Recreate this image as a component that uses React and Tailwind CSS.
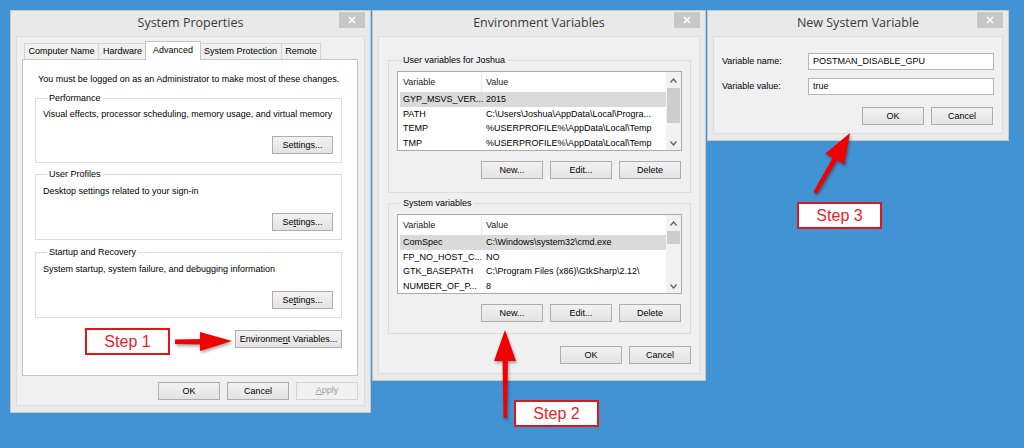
import React from 'react';

// Windows 8 style dialogs: System Properties -> Environment Variables -> New System Variable

const CloseGlyph = () => (
  <svg width="8" height="8" viewBox="0 0 8 8">
    <path d="M1 1 L7 7 M7 1 L1 7" stroke="#ffffff" strokeWidth="1.6" />
  </svg>
);

const Win = ({ title, className, children }) => (
  <div className={`absolute flex flex-col bg-[#e9e9e9] border border-[#c8c8c8] ${className}`}>
    <div className="relative h-[25px] shrink-0 flex items-center justify-center">
      <span className="font-['Open_Sans',sans-serif] text-[12.5px] text-[#3a3a3a]">{title}</span>
      <div className="absolute right-[5px] top-[1px] w-[26px] h-[16px] bg-[#c7c7c7] flex items-center justify-center">
        <CloseGlyph />
      </div>
    </div>
    <div className="flex-1 mx-[5px] mb-[6px] bg-[#f0f0f0] border border-[#dcdcdc] flex flex-col">{children}</div>
  </div>
);

const Btn = ({ children, className = '' }) => (
  <div className={`h-[18px] flex items-center justify-center border border-[#adadad] bg-linear-to-b from-[#f2f2f2] to-[#e3e3e3] text-black text-[9px] leading-none ${className}`}>
    {children}
  </div>
);

const Group = ({ label, className = '', children }) => (
  <fieldset className={`border border-[#dcdcdc] ${className}`}>
    <legend className="ml-[4px] px-[2px] text-[9px] leading-[12px] text-black">{label}</legend>
    {children}
  </fieldset>
);

const Chevron = ({ up }) => (
  <svg width="7" height="5" viewBox="0 0 7 5">
    <path d={up ? 'M0.5 4.5 L3.5 1 L6.5 4.5' : 'M0.5 0.5 L3.5 4 L6.5 0.5'} fill="none" stroke="#606060" strokeWidth="1.2" />
  </svg>
);

const VarList = ({ rows, thumb }) => (
  <div className="h-[80px] border border-[#ababab] bg-white flex">
    <div className="flex-1 flex flex-col min-w-0">
      <div className="h-[20px] shrink-0 flex items-center text-[9px] text-[#222]">
        <div className="w-[84px] h-full pl-[5px] flex items-center border-r border-[#e8e8e8]">Variable</div>
        <div className="pl-[4px]">Value</div>
      </div>
      {rows.map((r, i) => (
        <div
          key={r[0]}
          className={`h-[14.5px] ml-[2px] flex items-center text-[9px] whitespace-nowrap overflow-hidden ${i === 0 ? 'bg-[#dadada]' : ''}`}
        >
          <div className="w-[82px] pl-[3px] shrink-0">{r[0]}</div>
          <div className="pl-[4px]">{r[1]}</div>
        </div>
      ))}
    </div>
    <div className="w-[15px] shrink-0 bg-[#f2f2f2] flex flex-col">
      <div className="h-[16px] flex items-center justify-center"><Chevron up /></div>
      <div className={`mx-[1px] bg-[#cdcdcd] ${thumb}`} />
      <div className="flex-1" />
      <div className="h-[14px] flex items-center justify-center"><Chevron /></div>
    </div>
  </div>
);

const tabs = [
  { label: 'Computer Name', w: 'w-[75px]' },
  { label: 'Hardware', w: 'w-[49px]' },
  { label: 'Advanced', w: 'w-[56px]', active: true },
  { label: 'System Protection', w: 'w-[83px]' },
  { label: 'Remote', w: 'w-[40px]' },
];

const SystemProperties = () => (
  <Win title="System Properties" className="left-[10px] top-[10px] w-[361px] h-[403px]">
    <div className="pl-[5px] pr-[6px] pt-[4px] flex flex-col">
      <div className="h-[18px] flex items-end pl-[2px]">
        {tabs.map((t, i) =>
          t.active ? (
            <div
              key={t.label}
              className={`${t.w} -ml-[2px] -mr-[1px] relative z-10 -mb-px h-[19px] bg-white border border-b-0 border-[#c4c4c4] flex items-center justify-center text-[9px]`}
            >
              {t.label}
            </div>
          ) : (
            <div
              key={t.label}
              className={`${t.w} ${i > 0 ? '-ml-px' : ''} h-[16px] bg-[#f0f0f0] border border-b-0 border-[#d4d4d4] flex items-center justify-center text-[9px]`}
            >
              {t.label}
            </div>
          )
        )}
      </div>
      <div className="h-[317px] bg-white border border-[#c4c4c4] pl-[12px] pr-[15px] pt-[13px] flex flex-col text-[9px] leading-[12px]">
        <p className="pl-[3px]">You must be logged on as an Administrator to make most of these changes.</p>

        <Group label="Performance" className="mt-[7px] pl-[7px] pr-[8px] pb-[8px]">
          <p className="pt-[4px]">Visual effects, processor scheduling, memory usage, and virtual memory</p>
          <div className="mt-[16px] flex justify-end">
            <Btn className="w-[61px]">Settings...</Btn>
          </div>
        </Group>

        <Group label="User Profiles" className="mt-[5px] pl-[7px] pr-[8px] pb-[8px]">
          <p className="pt-[5px]">Desktop settings related to your sign-in</p>
          <div className="mt-[16px] flex justify-end">
            <Btn className="w-[61px]">Se<span className="underline">t</span>tings...</Btn>
          </div>
        </Group>

        <Group label="Startup and Recovery" className="mt-[6px] pl-[7px] pr-[8px] pb-[8px]">
          <p className="pt-[5px]">System startup, system failure, and debugging information</p>
          <div className="mt-[16px] flex justify-end">
            <Btn className="w-[61px]">Se<span className="underline">t</span>tings...</Btn>
          </div>
        </Group>

        <div className="mt-[12px] flex justify-end">
          <Btn className="w-[107px]">Environme<span className="underline">n</span>t Variables...</Btn>
        </div>
      </div>
      <div className="mt-[6px] flex justify-end gap-[7px]">
        <Btn className="w-[62px]">OK</Btn>
        <Btn className="w-[62px]">Cancel</Btn>
        <div className="w-[62px] h-[18px] flex items-center justify-center border border-[#d3d3d3] bg-[#f1f1f1] text-[#a0a0a0] text-[9px]">
          <span className="underline">A</span>pply
        </div>
      </div>
    </div>
  </Win>
);

const userVars = [
  ['GYP_MSVS_VER...', '2015'],
  ['PATH', 'C:\\Users\\Joshua\\AppData\\Local\\Progra...'],
  ['TEMP', '%USERPROFILE%\\AppData\\Local\\Temp'],
  ['TMP', '%USERPROFILE%\\AppData\\Local\\Temp'],
];

const sysVars = [
  ['ComSpec', 'C:\\Windows\\system32\\cmd.exe'],
  ['FP_NO_HOST_C...', 'NO'],
  ['GTK_BASEPATH', 'C:\\Program Files (x86)\\GtkSharp\\2.12\\'],
  ['NUMBER_OF_P...', '8'],
];

const ListButtons = () => (
  <div className="mt-[10px] mr-[1px] flex justify-end gap-[7px]">
    <Btn className="w-[62px]">New...</Btn>
    <Btn className="w-[62px]">Edit...</Btn>
    <Btn className="w-[62px]">Delete</Btn>
  </div>
);

const EnvironmentVariables = () => (
  <Win title="Environment Variables" className="left-[372px] top-[10px] w-[334px] h-[371px]">
    <div className="pl-[9px] pr-[8px] pt-[17px] flex flex-col text-[9px] leading-[12px]">
      <Group label="User variables for Joshua" className="px-[8px] pb-[13px]">
        <div className="pt-[5px]">
          <VarList rows={userVars} thumb="h-[35px]" />
        </div>
        <ListButtons />
      </Group>
      <Group label="System variables" className="mt-[4px] px-[8px] pb-[11px]">
        <div className="pt-[5px]">
          <VarList rows={sysVars} thumb="h-[13px]" />
        </div>
        <ListButtons />
      </Group>
      <div className="mt-[12px] flex justify-end gap-[7px]">
        <Btn className="w-[62px]">OK</Btn>
        <Btn className="w-[62px]">Cancel</Btn>
      </div>
    </div>
  </Win>
);

const NewSystemVariable = () => (
  <Win title="New System Variable" className="left-[707px] top-[10px] w-[302px] h-[131px]">
    <div className="pl-[8px] pr-[8px] pt-[16px] flex flex-col text-[9px]">
      <div className="h-[17px] flex items-center">
        <span className="w-[86px] shrink-0">Variable name:</span>
        <div className="flex-1 h-full bg-white border border-[#b5b5b5] pl-[4px] flex items-center">POSTMAN_DISABLE_GPU</div>
      </div>
      <div className="mt-[8px] h-[17px] flex items-center">
        <span className="w-[86px] shrink-0">Variable value:</span>
        <div className="flex-1 h-full bg-white border border-[#b5b5b5] pl-[4px] flex items-center">true</div>
      </div>
      <div className="mt-[12px] mr-[1px] flex justify-end gap-[7px]">
        <Btn className="w-[62px]">OK</Btn>
        <Btn className="w-[62px]">Cancel</Btn>
      </div>
    </div>
  </Win>
);

const StepLabel = ({ text, className }) => (
  <div className={`absolute w-[85px] h-[27px] bg-white border-2 border-[#e3151c] flex items-center justify-center text-[16px] text-[#ee1c24] ${className}`}>
    {text}
  </div>
);

const Arrows = () => (
  <svg
    className="absolute left-0 top-0 pointer-events-none drop-shadow-[1px_2px_1.5px_rgba(0,0,0,0.35)]"
    width="1024"
    height="448"
    viewBox="0 0 1024 448"
  >
    {/* step 1 -> Environment Variables button */}
    <polygon points="175,339.5 203,339 203,344.5 175,344" fill="#f20000" />
    <polygon points="200,332 232,341 200,351" fill="#f20000" />
    {/* step 2 -> New... */}
    <polygon points="502.5,358 508,358 507,418 503.5,418" fill="#f20000" />
    <polygon points="505,330 516,361 494,361" fill="#f20000" />
    {/* step 3 -> OK */}
    <polygon points="838.1,158.5 833.7,155.9 813.3,192 816.7,194" fill="#f20000" />
    <polygon points="850,133 844.4,164.4 825.4,153.4" fill="#f20000" />
  </svg>
);

export default function App() {
  return (
    <div className="relative w-[1024px] h-[448px] overflow-hidden bg-[#4293d3] font-['Liberation_Sans',Arial,sans-serif] text-black">
      <SystemProperties />
      <EnvironmentVariables />
      <NewSystemVariable />
      <StepLabel text="Step 1" className="left-[85px] top-[328px]" />
      <StepLabel text="Step 2" className="left-[514px] top-[400px]" />
      <StepLabel text="Step 3" className="left-[797px] top-[202px]" />
      <Arrows />
    </div>
  );
}
